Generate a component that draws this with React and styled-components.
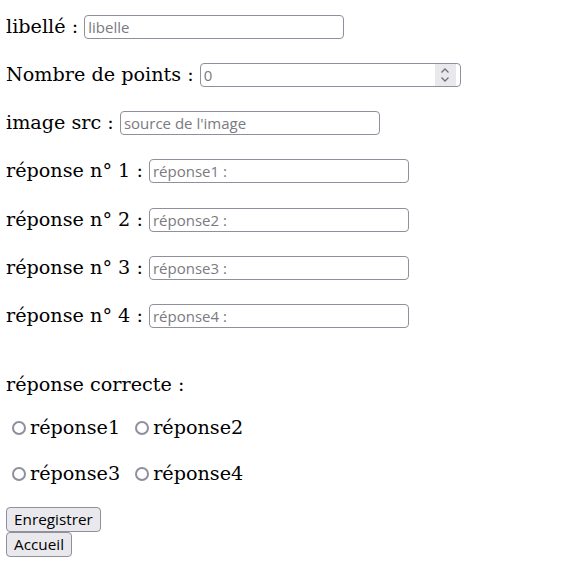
import React from "react";
import styled, { createGlobalStyle } from "styled-components";

const Global = createGlobalStyle`
  html, body {
    margin: 0;
    padding: 0;
    background: #fff;
  }
  body {
    font-family: "DejaVu Serif", serif;
    font-size: 19.2px;
    color: #000;
  }
`;

const Form = styled.form`
  display: flex;
  flex-direction: column;
  align-items: flex-start;
  padding: 14.5px 6px 0;
`;

const Row = styled.div`
  display: flex;
  align-items: baseline;
  height: 24px;
  margin-bottom: 24.3px;
`;

const Label = styled.label`
  font-family: "DejaVu Serif", serif;
  font-size: 19.2px;
  line-height: 22px;
  white-space: pre;
`;

const inputBase = `
  box-sizing: border-box;
  height: 24px;
  border: 1px solid #8f8f9d;
  border-radius: 4px;
  background: #fff;
  font-family: "Open Sans", sans-serif;
  font-size: 15px;
  color: #000;
`;

const Field = styled.input`
  ${inputBase}
  width: 260px;
  padding: 0 3px;
  margin: 0;
  outline: none;
  &::placeholder {
    color: #7a7a7f;
    opacity: 1;
  }
`;

const NumberBox = styled.div`
  ${inputBase}
  width: 261px;
  display: flex;
  align-items: stretch;
  padding: 0;
`;

const NumberField = styled.input`
  flex: 1;
  min-width: 0;
  border: none;
  outline: none;
  background: transparent;
  padding: 0 3px;
  margin: 0;
  font-family: "Open Sans", sans-serif;
  font-size: 15px;
  &::placeholder {
    color: #7a7a7f;
    opacity: 1;
  }
`;

const Spinner = styled.div`
  width: 21px;
  margin-right: 4px;
  background: #e9e9ed;
  display: flex;
  align-items: center;
  justify-content: center;
`;

const Title = styled.div`
  margin-top: 21.5px;
  line-height: 22px;
`;

const RadioRow = styled.div`
  display: flex;
  align-items: center;
  height: 22px;
  margin-top: ${(p) => p.$mt}px;
`;

const Radio = styled.input.attrs({ type: "radio", name: "correct" })`
  appearance: none;
  box-sizing: border-box;
  width: 14px;
  height: 14px;
  border: 2px solid #8f8f9d;
  border-radius: 50%;
  background: #fff;
  margin: 1px 4px 0 6px;
  flex: none;
  &:checked {
    border-width: 4px;
    border-color: #0060df;
  }
`;

const RadioLabel = styled.label`
  line-height: 22px;
  margin-right: 9px;
`;

const Button = styled.button`
  box-sizing: border-box;
  height: 25px;
  padding: 0 7px;
  margin: ${(p) => p.$mt || 0}px 0 0;
  border: 1px solid #8f8f9d;
  border-radius: 4px;
  background: #e9e9ed;
  color: #000;
  font-family: "Open Sans", sans-serif;
  font-size: 15.3px;
  line-height: 22px;
`;

const Chevrons = () => (
  <svg width="10" height="20" viewBox="0 0 10 20" fill="none">
    <path d="M1.5 7.5 L5 4 L8.5 7.5" stroke="#6f6f7a" strokeWidth="1.3" />
    <path d="M1.5 12.5 L5 16 L8.5 12.5" stroke="#6f6f7a" strokeWidth="1.3" />
  </svg>
);

export default function App() {
  return (
    <>
      <Global />
      <Form onSubmit={(e) => e.preventDefault()}>
        <Row>
          <Label>libellé : </Label>
          <Field type="text" placeholder="libelle" />
        </Row>
        <Row>
          <Label>Nombre de points : </Label>
          <NumberBox>
            <NumberField type="text" inputMode="numeric" placeholder="0" />
            <Spinner>
              <Chevrons />
            </Spinner>
          </NumberBox>
        </Row>
        <Row>
          <Label>image src : </Label>
          <Field type="text" placeholder="source de l'image" />
        </Row>
        {[1, 2, 3, 4].map((n) => (
          <Row key={n}>
            <Label>réponse n° {n} : </Label>
            <Field type="text" placeholder={`réponse${n} :`} />
          </Row>
        ))}
        <Title>réponse correcte :</Title>
        <RadioRow $mt={20.5}>
          <Radio value="1" />
          <RadioLabel>réponse1</RadioLabel>
          <Radio value="2" />
          <RadioLabel>réponse2</RadioLabel>
        </RadioRow>
        <RadioRow $mt={24}>
          <Radio value="3" />
          <RadioLabel>réponse3</RadioLabel>
          <Radio value="4" />
          <RadioLabel>réponse4</RadioLabel>
        </RadioRow>
        <Button type="submit" $mt={22}>Enregistrer</Button>
        <Button type="button">Accueil</Button>
      </Form>
    </>
  );
}
